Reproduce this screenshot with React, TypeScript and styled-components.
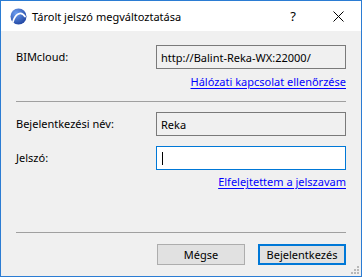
import React from "react";
import styled, { createGlobalStyle } from "styled-components";

const GlobalStyle = createGlobalStyle`
  html, body {
    margin: 0;
    padding: 0;
    background: #ffffff;
  }
  body {
    font-family: "Segoe UI", "Noto Sans", "Liberation Sans", sans-serif;
    font-size: 11px;
    color: #000;
  }
`;

const Window = styled.div`
  width: 362px;
  height: 277px;
  box-sizing: border-box;
  border: 1px solid #2b7cd3;
  display: flex;
  flex-direction: column;
  background: #f0f0f0;
  position: relative;
`;

const TitleBar = styled.div`
  height: 30px;
  background: #fff;
  display: flex;
  align-items: center;
  padding-left: 9px;
  .title {
    margin-left: 5px;
    font-size: 11px;
    flex: 1;
    color: #000;
  }
`;

const TitleButton = styled.div<{ $w: number }>`
  width: ${(p) => p.$w}px;
  height: 30px;
  display: flex;
  align-items: center;
  justify-content: center;
  font-size: 13px;
`;

const Body = styled.div`
  flex: 1;
  display: flex;
  flex-direction: column;
  padding: 14px 15px 11px 15px;
`;

const Row = styled.div<{ $top: number }>`
  display: grid;
  grid-template-columns: 140px 1fr;
  align-items: center;
  margin-top: ${(p) => p.$top}px;
`;

const Label = styled.span`
  line-height: 16px;
`;

const Field = styled.div<{ $active?: boolean }>`
  height: 24px;
  box-sizing: border-box;
  border: 1px solid ${(p) => (p.$active ? "#0078d7" : "#7a7a7a")};
  background: ${(p) => (p.$active ? "#fff" : "#f0f0f0")};
  display: flex;
  align-items: center;
  padding-left: 4px;
  .caret {
    width: 1px;
    height: 13px;
    background: #000;
    margin-left: 1px;
  }
`;

const LinkRow = styled.div<{ $top: number }>`
  display: flex;
  justify-content: flex-end;
  margin-top: ${(p) => p.$top}px;
  line-height: 16px;
  a {
    color: #0000ff;
    text-decoration: underline;
    text-underline-offset: 2px;
  }
`;

const Separator = styled.div<{ $top?: number }>`
  height: 1px;
  background: #a0a0a0;
  margin-top: ${(p) => (p.$top === undefined ? "auto" : `${p.$top}px`)};
`;

const Footer = styled.div`
  display: flex;
  justify-content: flex-end;
  gap: 13px;
  margin-top: 11px;
`;

const Button = styled.button<{ $primary?: boolean }>`
  width: 88px;
  height: 21px;
  box-sizing: border-box;
  font-family: inherit;
  font-size: 11px;
  color: #000;
  background: #e1e1e1;
  border: ${(p) => (p.$primary ? "2px solid #0078d7" : "1px solid #adadad")};
  padding: 0;
`;

const Grip = styled.svg`
  position: absolute;
  right: 1px;
  bottom: 1px;
`;

function AppIcon() {
  return (
    <svg width="17" height="17" viewBox="0 0 17 17">
      <defs>
        <radialGradient id="g" cx="0.35" cy="0.3" r="0.8">
          <stop offset="0" stopColor="#6d9ef0" />
          <stop offset="1" stopColor="#1b3f9c" />
        </radialGradient>
      </defs>
      <circle cx="8.5" cy="8.5" r="8" fill="url(#g)" />
      <path
        d="M3 14 C5 6, 11 2.5, 15 8.5"
        stroke="#fff"
        strokeWidth="1.8"
        fill="none"
        strokeLinecap="round"
      />
    </svg>
  );
}

export default function App() {
  return (
    <>
      <GlobalStyle />
      <Window>
        <TitleBar>
          <AppIcon />
          <span className="title">Tárolt jelszó megváltoztatása</span>
          <TitleButton $w={46}>?</TitleButton>
          <TitleButton $w={45}>
            <svg width="11" height="11" viewBox="0 0 11 11">
              <path d="M0.5 0.5 L10.5 10.5 M10.5 0.5 L0.5 10.5" stroke="#000" strokeWidth="1" />
            </svg>
          </TitleButton>
        </TitleBar>
        <Body>
          <Row $top={0}>
            <Label>BIMcloud:</Label>
            <Field>http://Balint-Reka-WX:22000/</Field>
          </Row>
          <LinkRow $top={5}>
            <a>Hálózati kapcsolat ellenőrzése</a>
          </LinkRow>
          <Separator $top={11} />
          <Row $top={10}>
            <Label>Bejelentkezési név:</Label>
            <Field>Reka</Field>
          </Row>
          <Row $top={10}>
            <Label>Jelszó:</Label>
            <Field $active>
              <span className="caret" />
            </Field>
          </Row>
          <LinkRow $top={4}>
            <a>Elfelejtettem a jelszavam</a>
          </LinkRow>
          <Separator />
          <Footer>
            <Button>Mégse</Button>
            <Button $primary>Bejelentkezés</Button>
          </Footer>
        </Body>
        <Grip width="10" height="10" viewBox="0 0 10 10">
          <rect x="7" y="1" width="2" height="2" fill="#b8b8b8" />
          <rect x="4" y="4" width="2" height="2" fill="#b8b8b8" />
          <rect x="7" y="4" width="2" height="2" fill="#b8b8b8" />
          <rect x="1" y="7" width="2" height="2" fill="#b8b8b8" />
          <rect x="4" y="7" width="2" height="2" fill="#b8b8b8" />
          <rect x="7" y="7" width="2" height="2" fill="#b8b8b8" />
        </Grip>
      </Window>
    </>
  );
}
